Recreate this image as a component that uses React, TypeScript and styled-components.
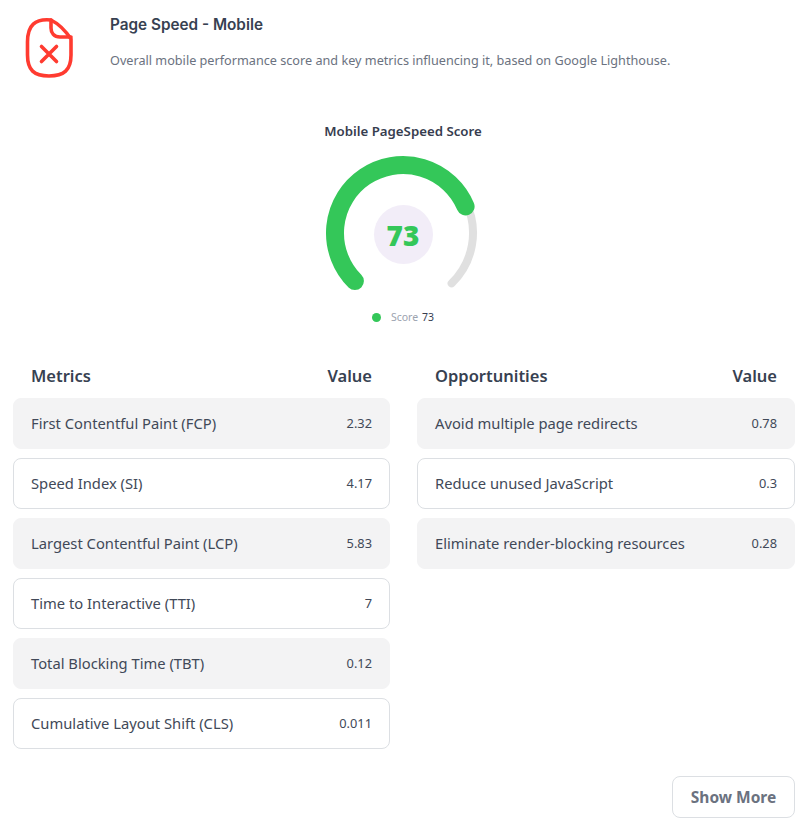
import styled, { createGlobalStyle } from "styled-components";

const GlobalStyle = createGlobalStyle`
  html, body {
    margin: 0;
    padding: 0;
    background: #fff;
  }
  * {
    box-sizing: border-box;
  }
`;

const Page = styled.div`
  width: 805px;
  height: 832px;
  overflow: hidden;
  padding: 0 10px 0 13px;
  font-family: "Noto Sans", "Open Sans", sans-serif;
  color: #374151;
`;

const Header = styled.header`
  display: flex;
  gap: 36px;
  padding: 16px 0 0 11px;
  height: 122px;
`;

const HeaderText = styled.div`
  display: flex;
  flex-direction: column;
`;

const Title = styled.h1`
  margin: 0;
  font-family: Inter, sans-serif;
  font-size: 15.3px;
  line-height: 18px;
  font-weight: 600;
  color: #374151;
`;

const Description = styled.p`
  margin: 17px 0 0;
  font-size: 12.66px;
  line-height: 18px;
  color: #6b7280;
`;

const GaugeSection = styled.section`
  display: flex;
  flex-direction: column;
  align-items: center;
  height: 236px;
  padding-right: 2px;
`;

const GaugeTitle = styled.h2`
  margin: 0;
  font-size: 13.25px;
  line-height: 18px;
  font-weight: 600;
  color: #373d4f;
`;

const GaugeWrap = styled.div`
  position: relative;
  width: 160px;
  height: 140px;
  margin-top: 12px;
`;

const GaugeValue = styled.span`
  position: absolute;
  left: 21px;
  top: 24px;
  width: 118px;
  height: 118px;
  display: flex;
  align-items: center;
  justify-content: center;
  font-family: "Open Sans", sans-serif;
  font-size: 28px;
  font-weight: 800;
  color: #34c759;
`;

const Legend = styled.div`
  display: flex;
  align-items: center;
  margin-top: 18px;
  font-size: 10.5px;
  line-height: 14px;
  color: #9ca3af;
`;

const LegendDot = styled.i`
  width: 9px;
  height: 9px;
  border-radius: 50%;
  background: #34c759;
  margin-right: 10px;
`;

const LegendValue = styled.b`
  margin-left: 4px;
  font-weight: 400;
  color: #373d4f;
`;

const Tables = styled.div`
  display: grid;
  grid-template-columns: 377px 378px;
  gap: 27px;
  align-items: start;
`;

const Column = styled.div`
  display: flex;
  flex-direction: column;
  gap: 9px;
`;

const HeadRow = styled.div`
  display: flex;
  justify-content: space-between;
  align-items: center;
  height: 34px;
  padding: 0 18px;
  font-size: 16.5px;
  font-weight: 600;
  color: #374151;
  margin-bottom: -3px;
`;

const Row = styled.div<{ $striped: boolean }>`
  display: flex;
  justify-content: space-between;
  align-items: center;
  height: 51px;
  padding: 0 17px 2px;
  border-radius: 8px;
  font-size: 14.75px;
  color: #414958;
  background: ${(p) => (p.$striped ? "#f3f3f4" : "#fff")};
  border: 1px solid ${(p) => (p.$striped ? "#f3f3f4" : "#dcdfe3")};
`;

const RowValue = styled.span`
  font-size: 12.8px;
`;

const Footer = styled.div`
  display: flex;
  justify-content: flex-end;
  margin-top: 27px;
`;

const MoreButton = styled.button`
  width: 123px;
  height: 42px;
  border: 1px solid #dcdfe3;
  border-radius: 8px;
  background: #fff;
  font-family: "Noto Sans", sans-serif;
  font-size: 15.5px;
  font-weight: 700;
  color: #6b7280;
`;

const metrics = [
  ["First Contentful Paint (FCP)", "2.32"],
  ["Speed Index (SI)", "4.17"],
  ["Largest Contentful Paint (LCP)", "5.83"],
  ["Time to Interactive (TTI)", "7"],
  ["Total Blocking Time (TBT)", "0.12"],
  ["Cumulative Layout Shift (CLS)", "0.011"],
];

const opportunities = [
  ["Avoid multiple page redirects", "0.78"],
  ["Reduce unused JavaScript", "0.3"],
  ["Eliminate render-blocking resources", "0.28"],
];

function polar(r: number, deg: number) {
  const a = ((deg - 90) * Math.PI) / 180;
  return `${80 + r * Math.cos(a)} ${81 + r * Math.sin(a)}`;
}

function arc(r: number, from: number, to: number) {
  const large = to - from > 180 ? 1 : 0;
  return `M${polar(r, from)} A${r} ${r} 0 ${large} 1 ${polar(r, to)}`;
}

function Gauge() {
  return (
    <GaugeWrap>
      <svg width="160" height="140" viewBox="0 0 160 140">
        <path d={arc(70, 64, 136)} fill="none" stroke="#e0e0e0" strokeWidth="8" strokeLinecap="round" />
        <path d={arc(68, -135, 67)} fill="none" stroke="#34c759" strokeWidth="18" strokeLinecap="round" />
        <circle cx="80.5" cy="82.5" r="29.5" fill="#f2edf8" />
      </svg>
      <GaugeValue>73</GaugeValue>
    </GaugeWrap>
  );
}

function DataTable({ heading, rows }: { heading: string; rows: string[][] }) {
  return (
    <Column>
      <HeadRow>
        <span>{heading}</span>
        <span>Value</span>
      </HeadRow>
      {rows.map(([name, value], i) => (
        <Row key={name} $striped={i % 2 === 0}>
          <span>{name}</span>
          <RowValue>{value}</RowValue>
        </Row>
      ))}
    </Column>
  );
}

export default function App() {
  return (
    <Page>
      <GlobalStyle />
      <Header>
        <svg width="50" height="64" viewBox="24 16 50 64" fill="none" stroke="#ff3b30" strokeWidth="3.6" strokeLinecap="round" strokeLinejoin="round">
          <path d="M51 20C35 18.5 27.5 25 27.5 42V55C27.5 70 34 76 49 76C64 76 71 70 71 55V39C65 30 59 24 51 20Z" />
          <path d="M51 20V28C51 33 54 37 60 37H71" />
          <path d="M41.5 46.5L56.5 61.5M56.5 46.5L41.5 61.5" />
        </svg>
        <HeaderText>
          <Title>Page Speed - Mobile</Title>
          <Description>
            Overall mobile performance score and key metrics influencing it, based on Google Lighthouse.
          </Description>
        </HeaderText>
      </Header>
      <GaugeSection>
        <GaugeTitle>Mobile PageSpeed Score</GaugeTitle>
        <Gauge />
        <Legend>
          <LegendDot />
          Score
          <LegendValue>73</LegendValue>
        </Legend>
      </GaugeSection>
      <Tables>
        <DataTable heading="Metrics" rows={metrics} />
        <DataTable heading="Opportunities" rows={opportunities} />
      </Tables>
      <Footer>
        <MoreButton>Show More</MoreButton>
      </Footer>
    </Page>
  );
}
